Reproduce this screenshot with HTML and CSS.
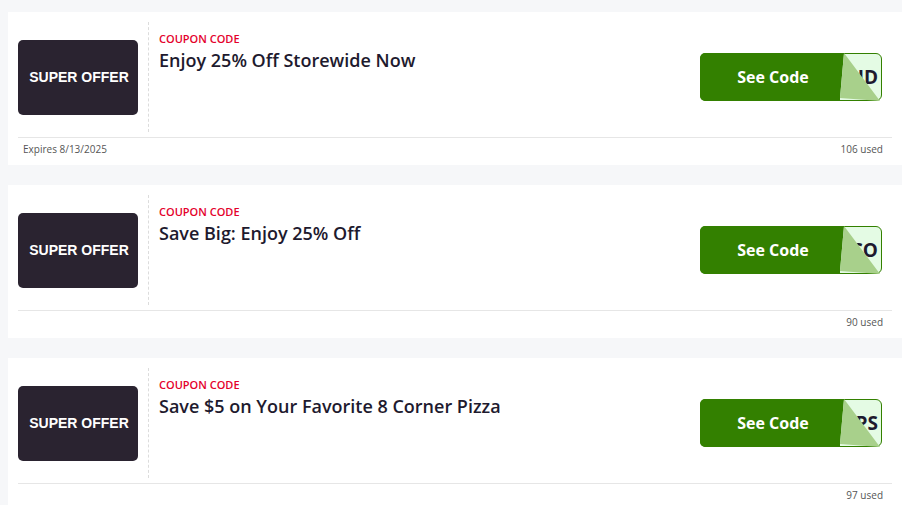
FILE: index.html
```html
<!DOCTYPE html>
<html lang="en">
<head>
    <meta charset="UTF-8">
    <meta name="viewport" content="width=device-width, initial-scale=1.0">
    <title>Coupons</title>
    <link rel="stylesheet" href="styles.css">
</head>
<body>
    <div class="list">
        <div class="card">
            <div class="row">
                <div class="logo">SUPER OFFER</div>
                <div class="info">
                    <div class="type">COUPON CODE</div>
                    <div class="title">Enjoy 25% Off Storewide Now</div>
                </div>
                <div class="btn">
                    <div class="code">ID</div>
                    <div class="see">See Code</div>
                    <svg class="peel" width="44" height="48" viewBox="0 0 44 48">
                        <polygon points="4,0 0,45 40,48" fill="#a8d08b"/>
                    </svg>
                </div>
            </div>
            <div class="foot">
                <span>Expires 8/13/2025</span>
                <span>106 used</span>
            </div>
        </div>

        <div class="card">
            <div class="row">
                <div class="logo">SUPER OFFER</div>
                <div class="info">
                    <div class="type">COUPON CODE</div>
                    <div class="title">Save Big: Enjoy 25% Off</div>
                </div>
                <div class="btn">
                    <div class="code">CO</div>
                    <div class="see">See Code</div>
                    <svg class="peel" width="44" height="48" viewBox="0 0 44 48">
                        <polygon points="4,0 0,45 40,48" fill="#a8d08b"/>
                    </svg>
                </div>
            </div>
            <div class="foot">
                <span></span>
                <span>90 used</span>
            </div>
        </div>

        <div class="card">
            <div class="row">
                <div class="logo">SUPER OFFER</div>
                <div class="info">
                    <div class="type">COUPON CODE</div>
                    <div class="title">Save $5 on Your Favorite 8 Corner Pizza</div>
                </div>
                <div class="btn">
                    <div class="code">PS</div>
                    <div class="see">See Code</div>
                    <svg class="peel" width="44" height="48" viewBox="0 0 44 48">
                        <polygon points="4,0 0,45 40,48" fill="#a8d08b"/>
                    </svg>
                </div>
            </div>
            <div class="foot">
                <span></span>
                <span>97 used</span>
            </div>
        </div>
    </div>
</body>
</html>
```
FILE: styles.css
```css
body{
    margin: 0;
    padding: 12px 0 0 8px;
    background-color: #f6f7f9;
    font-family: "Open Sans", Arial, sans-serif;
    overflow: hidden;
}
.list{
    display: flex;
    flex-direction: column;
    gap: 20px;
}
.card{
    background-color: white;
    padding: 10px 10px 0 10px;
    height: 153px;
    box-sizing: border-box;
}
.row{
    display: flex;
    align-items: center;
    height: 110px;
}
.logo{
    width: 120px;
    height: 75px;
    flex-shrink: 0;
    background-color: #2a2330;
    border-radius: 5px;
    color: white;
    font-family: Arial, "Liberation Sans", sans-serif;
    font-weight: bold;
    font-size: 14px;
    padding-left: 2px;
    box-sizing: border-box;
    display: flex;
    align-items: center;
    justify-content: center;
}
.info{
    flex: 1;
    align-self: stretch;
    margin-left: 10px;
    border-left: 1px dashed #dcdcdc;
    padding: 9px 0 0 10px;
}
.type{
    color: #e4002b;
    font-size: 11px;
    font-weight: 600;
    line-height: 16px;
}
.title{
    color: #1e1a2e;
    font-size: 18px;
    font-weight: 600;
    line-height: 24px;
    margin-top: 1px;
}
.btn{
    position: relative;
    width: 182px;
    height: 48px;
    margin-right: 10px;
    flex-shrink: 0;
}
.code{
    height: 100%;
    box-sizing: border-box;
    background-color: #e4fbe4;
    border: 1px solid #338000;
    border-radius: 6px;
    color: #1e1a2e;
    font-weight: bold;
    font-size: 19px;
    line-height: 46px;
    text-align: right;
    padding-right: 3px;
    overflow: hidden;
}
.see{
    position: absolute;
    left: 0;
    top: 0;
    width: 146px;
    height: 48px;
    background-color: #338000;
    border-radius: 5px 0 0 5px;
    color: white;
    font-weight: bold;
    font-size: 16px;
    line-height: 48px;
    text-align: center;
    clip-path: polygon(0 0, 144px 0, 140px 45px, 140px 100%, 0 100%);
}
.peel{
    position: absolute;
    left: 140px;
    top: 0;
}
.foot{
    border-top: 1px solid #e6e6e6;
    margin-top: 5px;
    display: flex;
    justify-content: space-between;
    padding: 4px 9px 0 5px;
    font-size: 10px;
    line-height: 14px;
    color: #555;
}
```
